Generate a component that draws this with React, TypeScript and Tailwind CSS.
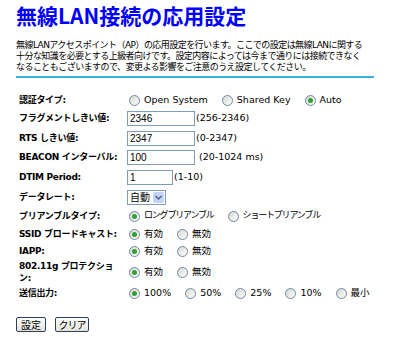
import React from "react";

function Radio({ checked, label, tight }: { checked?: boolean; label: string; tight?: boolean }) {
  return (
    <span className="inline-flex items-center mr-[12px]">
      <span className="ml-[2px] flex h-[11px] w-[11px] items-center justify-center rounded-full border border-[#6f87a8] bg-linear-to-br from-[#d6d6d0] to-white">
        {checked && <span className="h-[5px] w-[5px] rounded-full bg-[#2fa32f]" />}
      </span>
      <span className={tight ? "ml-[4px] whitespace-nowrap text-[9px] tracking-[-1.2px]" : "ml-[4px] whitespace-nowrap"}>
        {label}
      </span>
    </span>
  );
}

function TextBox({ value, w }: { value: string; w: string }) {
  return (
    <input
      type="text"
      readOnly
      defaultValue={value}
      className={`${w} h-[15px] border border-[#7f9db9] bg-white px-[2px] font-['Liberation_Sans',sans-serif] text-[10px] leading-[13px] text-black outline-none`}
    />
  );
}

function Row({ h, label, children }: { h: string; label: React.ReactNode; children: React.ReactNode }) {
  return (
    <div className={`flex items-center ${h}`}>
      <div className="w-[108px] shrink-0 text-[9px] font-bold leading-[12.5px] tracking-[-0.3px]">{label}</div>
      <div className="flex items-center whitespace-nowrap">{children}</div>
    </div>
  );
}

export default function App() {
  return (
    <div className="h-[355px] w-[400px] bg-white pl-[16px] font-['DejaVu_Sans','Noto_Sans_CJK_JP',sans-serif] text-[9.5px] text-black">
      <h1 className="h-[30px] font-['Noto_Sans_CJK_JP',sans-serif] text-[21px] font-bold leading-[30px] text-[#0000ff]">
        無線LAN接続の応用設定
      </h1>

      <p className="mt-[10px] whitespace-nowrap text-[9px] leading-[11px] tracking-[-0.55px]">
        無線LANアクセスポイント（AP）の応用設定を行います。ここでの設定は無線LANに関する
        <br />
        十分な知識を必要とする上級者向けです。設定内容によっては今まで通りには接続できなく
        <br />
        なることもございますので、変更よる影響をご注意のうえ設定してください。
      </p>

      <div className="mt-[3px] h-[2px] w-[358px] bg-[#3cb0dc]" />

      {/* settings table */}
      <div className="mt-[13px] pl-[3px]">
        <Row h="h-[18px]" label="認証タイプ:">
          <Radio label="Open System" />
          <Radio label="Shared Key" />
          <Radio checked label="Auto" />
        </Row>
        <Row h="h-[19px]" label="フラグメントしきい値:">
          <TextBox value="2346" w="w-[68px]" />
          <span className="ml-[1px]">(256-2346)</span>
        </Row>
        <Row h="h-[20px]" label="RTS しきい値:">
          <TextBox value="2347" w="w-[68px]" />
          <span className="ml-[1px]">(0-2347)</span>
        </Row>
        <Row h="h-[19px]" label="BEACON インターバル:">
          <TextBox value="100" w="w-[68px]" />
          <span className="ml-[4px]">(20-1024 ms)</span>
        </Row>
        <Row h="h-[20px]" label="DTIM Period:">
          <TextBox value="1" w="w-[46px]" />
          <span className="ml-[1px]">(1-10)</span>
        </Row>
        <Row h="h-[20px]" label="データレート:">
          <div className="flex h-[15px] w-[39px] items-center border border-[#7f9db9] bg-white">
            <span className="pl-[2px] font-['Noto_Sans_CJK_JP',sans-serif] text-[10px] leading-none">自動</span>
            <span className="ml-auto mr-[1px] flex h-[11px] w-[11px] items-center justify-center rounded-[2px] bg-[#c3d3f8]">
              <svg width="7" height="5" viewBox="0 0 7 5">
                <path d="M0.5 1 L3.5 4 L6.5 1" fill="none" stroke="#4d6185" strokeWidth="1.4" />
              </svg>
            </span>
          </div>
        </Row>
        <Row h="h-[18px]" label="プリアンブルタイプ:">
          <Radio checked tight label="ロングプリアンブル" />
          <Radio tight label="ショートプリアンブル" />
        </Row>
        <Row h="h-[18px]" label="SSID ブロードキャスト:">
          <Radio checked label="有効" />
          <Radio label="無効" />
        </Row>
        <Row h="h-[17px]" label="IAPP:">
          <Radio checked label="有効" />
          <Radio label="無効" />
        </Row>
        <Row
          h="h-[24px]"
          label={
            <>
              802.11g プロテクショ
              <br />ン:
            </>
          }
        >
          <Radio checked label="有効" />
          <Radio label="無効" />
        </Row>
        <Row h="h-[18px]" label="送信出力:">
          <Radio checked label="100%" />
          <Radio label="50%" />
          <Radio label="25%" />
          <Radio label="10%" />
          <Radio label="最小" />
        </Row>
      </div>

      <div className="mt-[15px] flex gap-[9px]">
        <button className="h-[15px] w-[30px] rounded-[2px] border border-[#2e3f5e] bg-linear-to-b from-white to-[#e2e2da] font-['Noto_Sans_CJK_JP',sans-serif] text-[10px] leading-none">
          設定
        </button>
        <button className="h-[15px] w-[34px] rounded-[2px] border border-[#2e3f5e] bg-linear-to-b from-white to-[#e2e2da] font-['Noto_Sans_CJK_JP',sans-serif] text-[10px] leading-none tracking-[-1px]">
          クリア
        </button>
      </div>
    </div>
  );
}
